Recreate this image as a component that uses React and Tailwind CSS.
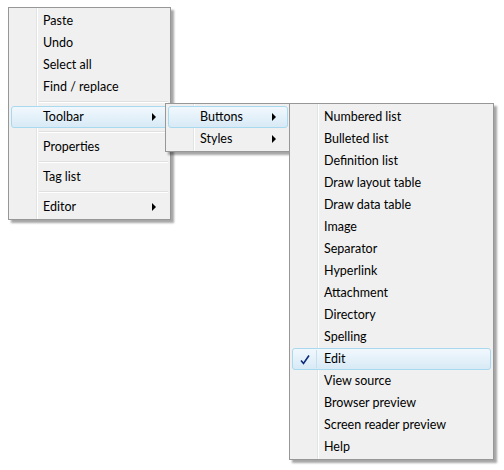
const font = { fontFamily: 'Lato, "Open Sans", "Noto Sans", sans-serif' };

function Arrow() {
  return (
    <span className="absolute right-[11px] top-1/2 -translate-y-1/2 w-0 h-0 border-y-[4px] border-y-transparent border-l-[4px] border-l-black" />
  );
}

function Check() {
  return (
    <svg className="absolute left-[6px] top-[5px]" width="12" height="12" viewBox="0 0 12 12">
      <path d="M2 6.5 L4.5 9.5 L10 1.5" fill="none" stroke="#0b2a7a" strokeWidth="1.6" />
    </svg>
  );
}

function Item({ label, active, sub, checked }) {
  return (
    <div className={
      active
        ? 'relative z-10 h-[22px] mx-[2px] flex items-center pl-[32px] text-[12.5px] text-black rounded-[3px] border border-[#a9d9ef] bg-gradient-to-b from-[#f1f8fd] to-[#d8eaf6]'
        : 'relative h-[22px] mx-[2px] flex items-center pl-[32px] text-[12.5px] text-black border border-transparent'
    }>
      {checked && <Check />}
      {checked && <span className="absolute left-[23px] top-[1px] bottom-[1px] w-px bg-[#c9dfec]" />}
      <span className="-translate-x-px">{label}</span>
      {sub && <Arrow />}
    </div>
  );
}

function Sep() {
  return (
    <div className="h-[8px] flex flex-col justify-center pl-[30px] pr-[2px]">
      <div className="h-px bg-[#e0e0e0]" />
      <div className="h-px bg-white" />
    </div>
  );
}

function Menu({ className, children }) {
  return (
    <div className={`absolute bg-[#f0f0f0] border border-[#979797] pt-[2px] pb-[1px] shadow-[3px_3px_2px_rgba(0,0,0,0.35)] ${className}`}>
      <div className="absolute left-[27px] top-0 bottom-0 w-px bg-[#e2e3e3]" />
      <div className="absolute left-[28px] top-0 bottom-0 w-px bg-white" />
      <div className="relative">{children}</div>
    </div>
  );
}

export default function App() {
  return (
    <div className="relative w-[504px] h-[470px] bg-white overflow-hidden" style={font}>
      <Menu className="left-[8px] top-[7px] w-[163px] z-0">
        <Item label="Paste" />
        <Item label="Undo" />
        <Item label="Select all" />
        <Item label="Find / replace" />
        <Sep />
        <Item label="Toolbar" active sub />
        <Sep />
        <Item label="Properties" />
        <Sep />
        <Item label="Tag list" />
        <Sep />
        <Item label="Editor" sub />
      </Menu>

      <Menu className="left-[165px] top-[103px] w-[126px] z-10">
        <Item label="Buttons" active sub />
        <Item label="Styles" sub />
      </Menu>

      <Menu className="left-[289px] top-[103px] w-[205px] z-20">
        <Item label="Numbered list" />
        <Item label="Bulleted list" />
        <Item label="Definition list" />
        <Item label="Draw layout table" />
        <Item label="Draw data table" />
        <Item label="Image" />
        <Item label="Separator" />
        <Item label="Hyperlink" />
        <Item label="Attachment" />
        <Item label="Directory" />
        <Item label="Spelling" />
        <Item label="Edit" active checked />
        <Item label="View source" />
        <Item label="Browser preview" />
        <Item label="Screen reader preview" />
        <Item label="Help" />
      </Menu>
    </div>
  );
}
